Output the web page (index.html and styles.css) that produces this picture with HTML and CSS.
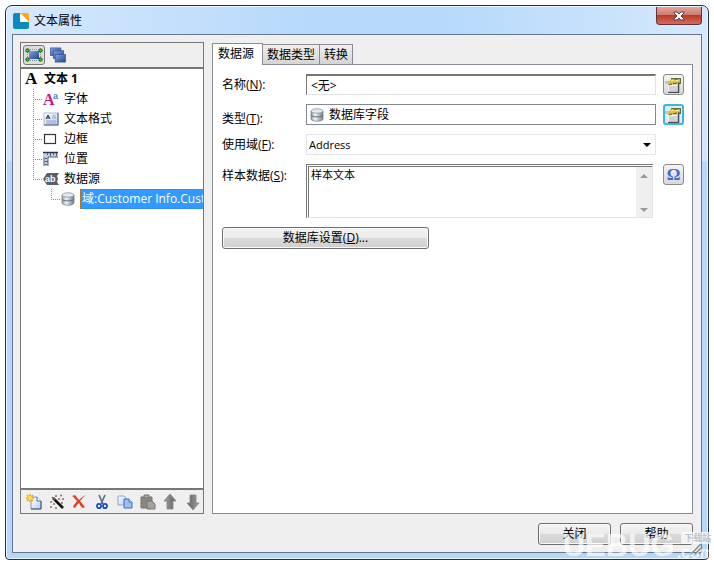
FILE: index.html
```html
<!DOCTYPE html>
<html lang="zh-CN">
<head>
    <meta charset="UTF-8">
    <meta name="viewport" content="width=device-width, initial-scale=1.0">
    <title>文本属性</title>
    <link rel="stylesheet" href="styles.css">
</head>
<body>
    <!-- Shared icons -->
    <svg class="sprite" aria-hidden="true">
        <defs>
            <linearGradient id="metal" x1="0" x2="1">
                <stop offset="0" stop-color="#8d98a1"/>
                <stop offset=".35" stop-color="#f2f6f8"/>
                <stop offset="1" stop-color="#6f7c87"/>
            </linearGradient>
            <linearGradient id="navy" x1="0" y1="0" x2="1" y2="1">
                <stop offset="0" stop-color="#86a4e0"/>
                <stop offset="1" stop-color="#1c429c"/>
            </linearGradient>
            <linearGradient id="page" x1="0" y1="0" x2="1" y2="1">
                <stop offset="0" stop-color="#ffffff"/>
                <stop offset="1" stop-color="#b9cdf0"/>
            </linearGradient>
            <linearGradient id="steel" x1="0" x2="1">
                <stop offset="0" stop-color="#a0a0a0"/>
                <stop offset="1" stop-color="#606060"/>
            </linearGradient>
        </defs>
        <symbol id="database" viewBox="0 0 14 14">
            <path d="M1 3v8c0 3 12 3 12 0V3z" fill="url(#metal)" stroke="#7b8791" stroke-width=".8"/>
            <path d="M1 7c0 2.500 12 2.500 12 0" fill="none" stroke="#65727d"/>
            <ellipse cx="7" cy="3" rx="6" ry="2.200" fill="#e3e9ed" stroke="#8b979f" stroke-width=".8"/>
        </symbol>
        <symbol id="properties" viewBox="0 0 17 16">
            <path d="M6 1h10v6H6z" fill="#5f6f3a"/>
            <path d="M3 6h10v9H3z" fill="#f7f7f7"/>
            <path d="M13.500 6v9.500H3" fill="none" stroke="#4a4d52" stroke-width="1.600"/>
            <path d="M4 10h8M4 12h8M4 14h8" stroke="#a8adb3"/>
            <path d="M0 4h4v3H0z" fill="#9fd0e6"/>
            <path d="M3 5l4-3 4 1 4-1v3l-3 1-1 2-2-1-2 1-1-1-3 1z" fill="#d9bd42"/>
            <path d="M6 4l3-1M10 4l4-1" stroke="#fff09a"/>
            <path d="M4 8l3-1M8 7l4-1" stroke="#4e5530"/>
        </symbol>
        <symbol id="arrow" viewBox="0 0 14 16">
            <path d="M7 0l6 7h-3v8H4V7H1z" fill="url(#steel)" stroke="#858585" stroke-width=".8"/>
        </symbol>
    </svg>

    <div class="window">
        <header class="titlebar">
            <svg class="logo" viewBox="0 0 16 16">
                <path d="M2 0h6v8h8v6a2 2 0 0 1-2 2H2a2 2 0 0 1-2-2V2a2 2 0 0 1 2-2z" fill="#0b8bbb"/>
                <path d="M7 0h7a2 2 0 0 1 2 2v7z" fill="#ffa51c"/>
                <path d="M7 0l9 9H7z" fill="#fff"/>
            </svg>
            <h1>文本属性</h1>
            <button class="close" type="button" aria-label="关闭窗口">
                <svg viewBox="0 0 12 10">
                    <path d="M1 1h3l2 2 2-2h3v1L8 5l3 3v1H8L6 7 4 9H1V8l3-3-3-3z" fill="#fff" stroke="#56414a" stroke-width="1"/>
                </svg>
            </button>
        </header>

        <main class="client">
            <div class="panes">
                <section class="sidebar">
                    <div class="view-bar">
                        <button class="view active" type="button" aria-label="对象">
                            <svg viewBox="0 0 18 14">
                                <rect x="4" y="3" width="10" height="8" fill="url(#navy)"/>
                                <path d="M5 1.500h8M5 12.500h8M2.500 4v6M15.500 4v6" fill="none" stroke="#888" stroke-dasharray="1 1"/>
                                <g fill="#2fdc25" stroke="#164b17">
                                    <circle cx="2.500" cy="2.500" r="1.700"/>
                                    <circle cx="15.500" cy="2.500" r="1.700"/>
                                    <circle cx="2.500" cy="11.500" r="1.700"/>
                                    <circle cx="15.500" cy="11.500" r="1.700"/>
                                </g>
                            </svg>
                        </button>
                        <button class="view" type="button" aria-label="图层">
                            <svg viewBox="0 0 18 17">
                                <g fill="url(#navy)" stroke="#3b5596" stroke-width=".8">
                                    <rect x="1" y="1" width="11" height="8"/>
                                    <rect x="4" y="4" width="11" height="8"/>
                                    <rect x="6" y="8" width="11" height="8"/>
                                </g>
                            </svg>
                        </button>
                    </div>

                    <div class="tree">
                        <div class="node root">
                            <svg class="icon-a" viewBox="0 0 13 14"><text x="0" y="12">A</text></svg>
                            <span>文本 1</span>
                        </div>
                        <ul>
                            <li>
                                <div class="node">
                                    <svg class="icon-font" viewBox="0 0 16 14">
                                        <text class="big" x="0" y="13">A</text>
                                        <text class="small" x="10" y="7">a</text>
                                    </svg>
                                    <span>字体</span>
                                </div>
                            </li>
                            <li>
                                <div class="node">
                                    <svg viewBox="0 0 16 14">
                                        <rect x="1" y="1" width="14" height="12" fill="url(#page)" stroke="#a9b9d0"/>
                                        <path d="M1 13h14V1" fill="none" stroke="#4a6288"/>
                                        <path d="M3 7l2-4 2 4M4 6h2" fill="none" stroke="#222"/>
                                        <path d="M9 4h4M9 6h4M3 9h10M3 11h10" stroke="#8fa4c8"/>
                                    </svg>
                                    <span>文本格式</span>
                                </div>
                            </li>
                            <li>
                                <div class="node">
                                    <svg viewBox="0 0 16 14"><rect x="1.500" y="2.500" width="11" height="9" fill="#fff" stroke="#333" stroke-width="1.200"/></svg>
                                    <span>边框</span>
                                </div>
                            </li>
                            <li>
                                <div class="node">
                                    <svg viewBox="0 0 16 14">
                                        <path d="M0 0h15v5H5v9H1V5H0z" fill="#c3cddb"/>
                                        <path d="M0 .5h15" stroke="#28344f" stroke-width="1.500"/>
                                        <path d="M5 14V5h10M1 5v9" fill="none" stroke="#52627a"/>
                                        <path d="M4.500 1v2M7.500 1v3M10.500 1v2M13.500 1v3M2 6.500h2M2 9.500h3M2 12.500h2" stroke="#52627a"/>
                                    </svg>
                                    <span>位置</span>
                                </div>
                            </li>
                            <li>
                                <div class="node">
                                    <svg class="icon-tag" viewBox="0 0 16 14">
                                        <path d="M4 1h12l-2 3 1 3-1 3 2 3H4L0 7z" fill="#56606d"/>
                                        <text x="2" y="10">ab</text>
                                    </svg>
                                    <span>数据源</span>
                                </div>
                                <ul>
                                    <li>
                                        <div class="node">
                                            <svg class="narrow"><use href="#database"/></svg>
                                            <span class="selected">域:Customer Info.Customer</span>
                                        </div>
                                    </li>
                                </ul>
                            </li>
                        </ul>
                    </div>

                    <div class="tool-bar">
                        <button type="button" aria-label="新建">
                            <svg viewBox="0 0 16 16">
                                <path d="M5 3h6l4 4v8H5z" fill="url(#page)" stroke="#8299bd"/>
                                <path d="M15 7v8H5" fill="none" stroke="#3f5880"/>
                                <path d="M11 3v4h4" fill="#fff" stroke="#5572a4"/>
                                <path d="M4 0v8M0 4h8M1 1l6 6M7 1L1 7" stroke="#f5a800" stroke-width="1.500"/>
                                <circle cx="4" cy="4" r="2" fill="#ffe45c"/>
                            </svg>
                        </button>
                        <button type="button" aria-label="向导">
                            <svg viewBox="0 0 16 16">
                                <path d="M4 4l10 10" stroke="#111" stroke-width="2.600"/>
                                <path d="M3 3l3 3" stroke="#777" stroke-width="1.500"/>
                                <g fill="#a07070">
                                    <circle cx="7" cy="2" r="1.100"/><circle cx="12" cy="1.500" r="1.100"/><circle cx="10" cy="5" r="1.100"/>
                                    <circle cx="14" cy="5" r="1.100"/><circle cx="2" cy="8" r="1.100"/><circle cx="5" cy="10" r="1.100"/>
                                    <circle cx="2" cy="13" r="1.100"/><circle cx="7" cy="14" r="1.100"/><circle cx="13" cy="9" r="1.100"/>
                                </g>
                            </svg>
                        </button>
                        <button type="button" aria-label="删除">
                            <svg viewBox="0 0 16 16">
                                <path d="M1 2l3-1c2 2 3 4 4 5 2-2 4-4 7-5-3 2-4 4-6 6 2 2 3 4 5 6l-2 1c-2-1-3-3-4-5-2 2-3 3-4 5l-2-1c1-3 3-4 4-6-2-2-3-4-5-5z" fill="#e0402b"/>
                            </svg>
                        </button>
                        <button type="button" aria-label="剪切">
                            <svg viewBox="0 0 16 16">
                                <path d="M5 1l4 9M11 1L7 10" stroke="#5b6f90" stroke-width="1.700"/>
                                <g fill="none" stroke="#1950c8" stroke-width="1.800">
                                    <ellipse cx="5" cy="12" rx="2" ry="2.200"/>
                                    <ellipse cx="11" cy="12" rx="2" ry="2.200"/>
                                </g>
                            </svg>
                        </button>
                        <button type="button" aria-label="复制">
                            <svg viewBox="0 0 16 16">
                                <g fill="url(#page)" stroke="#86a5d8">
                                    <path d="M1 2h6l2 2v7H1z"/>
                                    <path d="M7 5h5l3 3v6H7z" fill="#9dbdf0" stroke="#3e6fc0"/>
                                </g>
                                <path d="M12 5v3h3" fill="#fff" stroke="#3e6fc0"/>
                            </svg>
                        </button>
                        <button type="button" aria-label="粘贴">
                            <svg viewBox="0 0 16 16">
                                <path d="M1 3h11v11H1z" fill="#8a8783" stroke="#77746f"/>
                                <path d="M4 1h5v3H4z" fill="#aaa7a2" stroke="#77746f"/>
                                <path d="M7 7h5l3 3v5H7z" fill="#a3a19d" stroke="#77746f"/>
                            </svg>
                        </button>
                        <button type="button" aria-label="上移"><svg><use href="#arrow"/></svg></button>
                        <button type="button" aria-label="下移"><svg class="down"><use href="#arrow"/></svg></button>
                    </div>
                </section>

                <section class="content">
                    <div class="tabs" role="tablist">
                        <button class="tab active" type="button" role="tab" aria-selected="true">数据源</button>
                        <button class="tab" type="button" role="tab">数据类型</button>
                        <button class="tab" type="button" role="tab">转换</button>
                    </div>
                    <form class="form">
                        <label for="name">名称(<u>N</u>):</label>
                        <input class="name" id="name" type="text" value="&lt;无&gt;">
                        <button class="square" type="button" aria-label="名称属性"><svg><use href="#properties"/></svg></button>

                        <label class="low" for="type">类型(<u>T</u>):</label>
                        <div class="type-box">
                            <svg><use href="#database"/></svg>
                            <input id="type" type="text" value="数据库字段" readonly>
                        </div>
                        <button class="square hot" type="button" aria-label="类型属性"><svg><use href="#properties"/></svg></button>

                        <label for="field">使用域(<u>F</u>):</label>
                        <div class="combo">
                            <select id="field">
                                <option>Address</option>
                            </select>
                            <svg viewBox="0 0 8 4"><path d="M0 0h8L4 4z"/></svg>
                        </div>
                        <span></span>

                        <label class="top" for="sample">样本数据(<u>S</u>):</label>
                        <div class="sample">
                            <textarea id="sample">样本文本</textarea>
                            <div class="scroll">
                                <svg viewBox="0 0 8 4"><path d="M4 0l4 4H0z"/></svg>
                                <svg viewBox="0 0 8 4"><path d="M0 0h8L4 4z"/></svg>
                            </div>
                        </div>
                        <button class="square omega" type="button">Ω</button>

                        <button class="push settings" type="button">数据库设置(<u>D</u>)...</button>
                    </form>
                </section>
            </div>

            <footer class="footer">
                <button class="push" type="button">关闭</button>
                <button class="push" type="button">帮助</button>
            </footer>
        </main>
    </div>

    <div class="watermark">
        <strong>UEBUG</strong>
        <div>
            <em>下载站</em>
            <b>.com</b>
        </div>
        <svg viewBox="0 0 12 12"><path d="M1 11L11 1M5 11l6-6M9 11l2-2" stroke="#888" stroke-width="1.500"/></svg>
    </div>
</body>
</html>
```
FILE: styles.css
```css
* {
    box-sizing: border-box;
}
body {
    margin: 0;
    padding: 5px;
    height: 100vh;
    background: white;
    color: black;
    font: 12px/16px "Open Sans", "Noto Sans CJK SC", sans-serif;
    position: relative;
    overflow: hidden;
}
button, input, select, textarea {
    font: inherit;
    color: inherit;
    margin: 0;
    padding: 0;
    border: 0;
    background: none;
    min-width: 0;
}
svg {
    display: block;
    flex: none;
}
.sprite {
    position: absolute;
    width: 0;
    height: 0;
}

/* Window frame */
.window {
    display: flex;
    flex-direction: column;
    height: 100%;
    border: 1px solid #26313d;
    border-radius: 7px 7px 4px 4px;
    padding: 0 6px 6px;
    background: linear-gradient(#d9eafc, #cfe5fc 155px, #b5d7fb 156px);
    box-shadow: inset 0 0 0 1px #e9f5ff;
}
.titlebar {
    display: flex;
    align-items: center;
    gap: 5px;
    height: 27px;
    background: linear-gradient(90deg, #d6e8fb, #b5d8fb 45%, #b5d8fb 60%, #d4e8fc);
    margin: 1px -5px 0;
    padding: 0 5px 0 6px;
    border-radius: 6px 6px 0 0;
}
.titlebar h1 {
    flex: 1;
    margin: 0;
    font-size: 12px;
    font-weight: normal;
}
.logo {
    width: 16px;
    height: 16px;
}
.close {
    display: flex;
    align-items: center;
    justify-content: center;
    align-self: flex-start;
    width: 46px;
    height: 18px;
    border: 1px solid #65303a;
    border-top: 0;
    border-radius: 0 0 4px 4px;
    background: linear-gradient(#e3a69b, #d07c70 45%, #b93a27 50%, #d26e58);
}
.close svg {
    width: 12px;
    height: 10px;
}
.client {
    display: flex;
    flex-direction: column;
    flex: 1;
    min-height: 0;
    padding: 7px 8px 7px 7px;
    border: 1px solid #65798d;
    background: #efefef;
}
.panes {
    display: flex;
    gap: 8px;
    flex: 1;
    min-height: 0;
}

/* Left side */
.sidebar {
    display: flex;
    flex-direction: column;
    flex: 0 0 184px;
    min-width: 0;
    border: 1px solid #777;
    background: #efefef;
}
.view-bar {
    display: flex;
    align-items: center;
    height: 26px;
    padding: 0 2px;
    gap: 2px;
    border-bottom: 2px solid #777;
}
.view {
    display: flex;
    align-items: center;
    justify-content: center;
    width: 22px;
    height: 20px;
}
.view svg {
    width: 18px;
    height: 16px;
}
.view.active {
    border: 1px solid #777;
    border-radius: 3px;
    background: #ddd;
}
.tree {
    flex: 1;
    min-height: 0;
    overflow: hidden;
    background: white;
}
.tree ul {
    list-style: none;
    margin: 0;
    padding: 0 0 0 12px;
}
.tree ul ul {
    padding-left: 18px;
}
.node {
    display: flex;
    align-items: center;
    height: 20px;
    gap: 5px;
    white-space: nowrap;
}
.node svg {
    width: 16px;
    height: 14px;
    overflow: visible;
}
.node .narrow {
    width: 14px;
}
.root {
    padding-left: 4px;
    gap: 6px;
    font-weight: bold;
}
.node .icon-a {
    width: 13px;
}
/* dotted connector lines */
li > .node::before {
    content: "";
    width: 10px;
    height: 20px;
    margin-right: -5px;
    background:
        repeating-linear-gradient(#888 0 1px, white 1px 2px) 0 0 / 1px 20px no-repeat,
        repeating-linear-gradient(90deg, #888 0 1px, white 1px 2px) 0 10px / 10px 1px no-repeat;
    flex: none;
}
li:last-child > .node::before {
    background-size: 1px 10px, 10px 1px;
}
.selected {
    flex: 1;
    padding: 1px;
    border: 1px dotted #b06a20;
    border-right: 0;
    background: #3399ff;
    color: white;
}
.icon-a text {
    font: bold 17px "Liberation Serif", serif;
}
.icon-font .big {
    font: bold 16px "Liberation Serif", serif;
    fill: #c9187e;
}
.icon-font .small {
    font: bold 9px "Liberation Sans", sans-serif;
    fill: #4a7fe0;
}
.icon-tag text {
    font: bold 9px "Liberation Sans", sans-serif;
    fill: white;
}
.tool-bar {
    display: flex;
    align-items: center;
    justify-content: space-between;
    height: 25px;
    padding: 0 2px 0 5px;
    border-top: 2px solid #777;
}
.tool-bar svg {
    width: 16px;
    height: 16px;
}
.down {
    transform: rotate(180deg);
}

/* Right side */
.content {
    display: flex;
    flex-direction: column;
    flex: 1;
    min-width: 0;
}
.tabs {
    display: flex;
    align-items: flex-end;
    height: 22px;
    padding-top: 1px;
}
.tab {
    height: 20px;
    padding: 0 4px;
    border: 1px solid #898c95;
    border-left: 0;
    border-bottom: 0;
    background: linear-gradient(#f0f0f0, #d4d4d4);
}
.tab.active {
    height: 22px;
    padding: 0 8px 2px 5px;
    border-left: 1px solid #898c95;
    background: white;
    margin-bottom: -1px;
    z-index: 1;
}
.form {
    display: grid;
    grid-template-columns: 77px 1fr 21px;
    grid-auto-rows: min-content;
    gap: 9px 7px;
    flex: 1;
    padding: 9px 8px 9px 9px;
    border: 1px solid #898c95;
    background: white;
}
label {
    align-self: center;
    white-space: nowrap;
}
label.low {
    align-self: end;
    margin-bottom: -2px;
}
label.top {
    align-self: start;
    padding-top: 4px;
}
.name {
    height: 21px;
    padding: 0 4px;
    border: 1px solid #e3e3e3;
    border-top: 2px solid #777;
    border-left-color: #777;
}
.type-box {
    display: flex;
    align-items: center;
    gap: 5px;
    height: 21px;
    padding: 0 3px;
    border: 1px solid #828790;
}
.type-box svg {
    width: 14px;
    height: 14px;
}
.type-box input {
    flex: 1;
}
.combo {
    display: flex;
    position: relative;
    height: 21px;
    border: 1px solid #e1e6ee;
}
.combo select {
    flex: 1;
    padding: 0 2px;
    appearance: none;
    font-size: 11px;
}
.combo svg {
    position: absolute;
    right: 4px;
    top: 8px;
    width: 8px;
    height: 4px;
    pointer-events: none;
}
.sample {
    display: flex;
    height: 54px;
    margin-right: 3px;
    border: 1px solid #e3e3e3;
    border-top: 3px double #777;
    border-left: 3px double #777;
}
.sample textarea {
    flex: 1;
    padding: 0 2px;
    font-size: 11px;
    line-height: 16px;
    resize: none;
    overflow: hidden;
}
.scroll {
    display: flex;
    flex-direction: column;
    align-items: center;
    justify-content: space-between;
    width: 16px;
    padding: 7px 0 5px;
    background: #efefef;
    fill: #999;
}
.scroll svg {
    width: 8px;
    height: 4px;
}
.square {
    display: flex;
    align-items: center;
    justify-content: center;
    width: 21px;
    height: 21px;
    border: 1px solid #8a8a8a;
    border-radius: 3px;
    background: linear-gradient(#f4f4f4, #d8d8d8);
}
.square svg {
    width: 17px;
    height: 16px;
}
.square.hot {
    border: 2px solid #3fb4e4;
    background: #d9f1fb;
}
.omega {
    font: bold 17px/17px "Liberation Serif", serif;
    color: #3f6ad0;
}
.push {
    height: 22px;
    border: 1px solid #707070;
    border-radius: 3px;
    background: linear-gradient(#f3f3f3, #ebebeb 48%, #dadada 52%, #cfcfcf);
    box-shadow: inset 0 0 0 1px #f8f8f8;
}
.settings {
    grid-column: 1 / 3;
    width: 207px;
}
.footer {
    display: flex;
    justify-content: flex-end;
    gap: 9px;
    padding-top: 9px;
}
.footer .push {
    width: 73px;
}

/* Site mark over the bottom corner */
.watermark {
    position: absolute;
    right: 0;
    bottom: 3px;
    display: flex;
    align-items: flex-end;
    gap: 2px;
    color: rgba(255, 255, 255, 0.7);
    pointer-events: none;
}
.watermark strong {
    font: bold 31px/32px "Liberation Sans", sans-serif;
}
.watermark div {
    display: flex;
    flex-direction: column;
    align-items: flex-end;
}
.watermark em {
    padding: 0 3px;
    border-radius: 3px;
    background: rgba(255, 255, 255, 0.7);
    color: #b9c3cc;
    font: bold 9px/12px "Noto Sans CJK SC", sans-serif;
}
.watermark b {
    font: bold 16px/18px "Liberation Sans", sans-serif;
}
.watermark svg {
    position: absolute;
    right: 12px;
    bottom: 7px;
    width: 12px;
    height: 12px;
}
```
